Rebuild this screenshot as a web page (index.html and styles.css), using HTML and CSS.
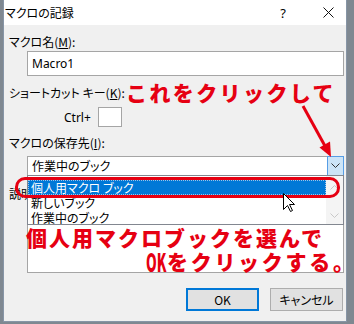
FILE: index.html
```html
<!DOCTYPE html>
<html lang="ja">
<head>
  <meta charset="UTF-8">
  <title>マクロの記録</title>
  <link rel="stylesheet" href="styles.css">
</head>
<body>
<div class="screen">

  <!-- Record macro dialog -->
  <div class="dialog">
    <div class="titlebar">
      <span class="title">マクロの記録</span>
      <span class="help">?</span>
      <span class="close">
        <svg width="11" height="11" viewBox="0 0 11 11"><path d="M0.5 0.5L10.5 10.5M10.5 0.5L0.5 10.5" stroke="#111" stroke-width="1"/></svg>
      </span>
    </div>

    <div class="content">
      <div class="label">マクロ名(<u>M</u>):</div>
      <div class="textbox name">Macro1</div>

      <div class="label gap-l">ショートカット キー(<u>K</u>):</div>
      <div class="shortcut"><span class="ctrl">Ctrl+</span><span class="keybox"></span></div>

      <div class="label gap-m">マクロの保存先(<u>I</u>):</div>
      <div class="combo">
        <span class="combo-text">作業中のブック</span>
        <span class="combo-btn">
          <svg width="9" height="6" viewBox="0 0 9 6"><path d="M0.5 0.5L4.5 4.5L8.5 0.5" fill="none" stroke="#333" stroke-width="1"/></svg>
        </span>
      </div>

      <div class="label gap-d">説明(<u>D</u>):</div>
      <div class="textbox desc"></div>

      <div class="buttons">
        <button class="btn default">OK</button>
        <button class="btn">キャンセル</button>
      </div>
    </div>
  </div>

  <!-- open list of the combo box -->
  <div class="droplist">
    <div class="items">
      <div class="item selected">個人用マクロ ブック</div>
      <div class="item">新しいブック</div>
      <div class="item">作業中のブック</div>
    </div>
    <div class="vscroll">
      <svg width="9" height="6" viewBox="0 0 9 6"><path d="M0.5 5.5L4.5 1.5L8.5 5.5" fill="none" stroke="#c8c8c8" stroke-width="1"/></svg>
      <svg width="9" height="6" viewBox="0 0 9 6"><path d="M0.5 0.5L4.5 4.5L8.5 0.5" fill="none" stroke="#c8c8c8" stroke-width="1"/></svg>
    </div>
  </div>

  <!-- Red annotations -->
  <div class="note note-top">これをクリックして</div>
  <svg class="arrow" width="354" height="324" viewBox="0 0 354 324">
    <line x1="303" y1="106" x2="325" y2="146" stroke="#e60012" stroke-width="3"/>
    <polygon points="331,157 319.5,147.5 330,141.5" fill="#e60012"/>
  </svg>
  <div class="ring"></div>
  <div class="note note-pick">個人用マクロブックを選んで</div>
  <div class="note note-ok"><span class="ok">OK</span>をクリックする<span class="last">。</span></div>

  <svg class="cursor" width="13" height="20" viewBox="0 0 13 20">
    <path d="M0.5 0.5L0.5 16.5L4.5 12.5L7.5 18.5L9.5 17.5L6.5 11.5L11.5 11.5Z" fill="#fff" stroke="#000" stroke-width="1"/>
  </svg>

</div>
</body>
</html>
```

FILE: styles.css
```css
* {
  box-sizing: border-box;
}
body {
  margin: 0;
  background: #7f8891;
  font-family: "Noto Sans CJK JP", "Noto Sans", sans-serif;
  font-size: 12px;
  color: #000;
  font-feature-settings: "palt";
}
.screen {
  position: relative;
  width: 354px;
  height: 324px;
  overflow: hidden;
}

/* dialog frame */
.dialog {
  margin-left: 3px;
  width: 344px;
  height: 322px;
  background: #f0f0f0;
  border: 1px solid #8795a6;
  border-top: none;
}
.titlebar {
  display: flex;
  align-items: center;
  height: 25px;
  background: #fff;
  padding-left: 1px;
}
.title {
  flex: 1;
}
.help {
  width: 20px;
  text-align: center;
  font-family: "Noto Sans", sans-serif;
  font-size: 13px;
}
.close {
  display: flex;
  justify-content: center;
  width: 30px;
  margin-left: 20px;
  margin-right: 3px;
}

/* form */
.content {
  padding: 9px 2px 0 5px;
}
.label {
  line-height: 16px;
}
.gap-l { margin-top: 9px; }
.gap-m { margin-top: 8px; }
.gap-d { margin-top: 10px; }
.textbox {
  margin: 1px 0 0 18px;
  background: #fff;
  border: 1px solid #a5a5a5;
}
.name {
  height: 25px;
  padding-left: 4px;
  line-height: 23px;
  font-family: "Noto Sans", sans-serif;
}
.desc {
  height: 70px;
}
.shortcut {
  display: flex;
  align-items: center;
  height: 20px;
  margin-top: 6px;
  padding-left: 55px;
}
.ctrl {
  width: 34px;
  font-family: "Noto Sans", sans-serif;
}
.keybox {
  width: 24px;
  height: 20px;
  background: #fff;
  border: 1px solid #a5a5a5;
}
.combo {
  display: flex;
  height: 20px;
  margin: 5px 0 0 18px;
  background: #fff;
  border: 1px solid #a5a5a5;
}
.combo-text {
  flex: 1;
  padding-left: 4px;
  line-height: 18px;
}
.combo-btn {
  display: flex;
  align-items: center;
  justify-content: center;
  width: 17px;
  height: 20px;
  margin: -1px -1px -1px 0;
  background: #cce4f7;
  border: 1px solid #569de5;
}
.buttons {
  display: flex;
  justify-content: flex-end;
  gap: 11px;
  margin: 15px 1px 0 0;
}
.btn {
  width: 73px;
  height: 23px;
  padding: 0;
  background: #e1e1e1;
  border: 1px solid #adadad;
  font: inherit;
  color: #000;
}
.btn.default {
  border: 2px solid #0078d7;
}

/* dropped-down list */
.droplist {
  position: absolute;
  left: 27px;
  top: 175px;
  width: 317px;
  height: 50px;
  display: flex;
  background: #fff;
  border: 1px solid #828790;
}
.items {
  flex: 1;
  padding-top: 4px;
}
.item {
  height: 15px;
  line-height: 15px;
  padding-left: 3px;
}
.item.selected {
  background: #0078d7;
  color: #fff;
  outline: 1px dotted #9cc3e8;
  outline-offset: -1px;
}
.vscroll {
  width: 17px;
  display: flex;
  flex-direction: column;
  justify-content: space-between;
  align-items: center;
  padding: 8px 0 5px;
  background: #f4f4f4;
}

/* annotations */
.note {
  position: absolute;
  color: #e60012;
  font-weight: 900;
  font-size: 21px;
  line-height: 21px;
  letter-spacing: 2.4px;
  white-space: nowrap;
  font-feature-settings: normal;
}
.note-top {
  left: 126px;
  top: 82px;
}
.note-pick {
  left: 26px;
  top: 227px;
  letter-spacing: 2px;
}
.note-ok {
  left: 146px;
  top: 251px;
  letter-spacing: 2.7px;
}
.note-ok .last {
  letter-spacing: 0;
}
.ok {
  display: inline-block;
  width: 21px;
  letter-spacing: 0;
  transform: scale(.65, 1.2);
  transform-origin: left center;
}
.arrow {
  position: absolute;
  left: 0;
  top: 0;
}
.ring {
  position: absolute;
  left: 15px;
  top: 177px;
  width: 325px;
  height: 21px;
  border: 3px solid #e60012;
  border-radius: 10px;
}
.cursor {
  position: absolute;
  left: 283px;
  top: 193px;
}
```
